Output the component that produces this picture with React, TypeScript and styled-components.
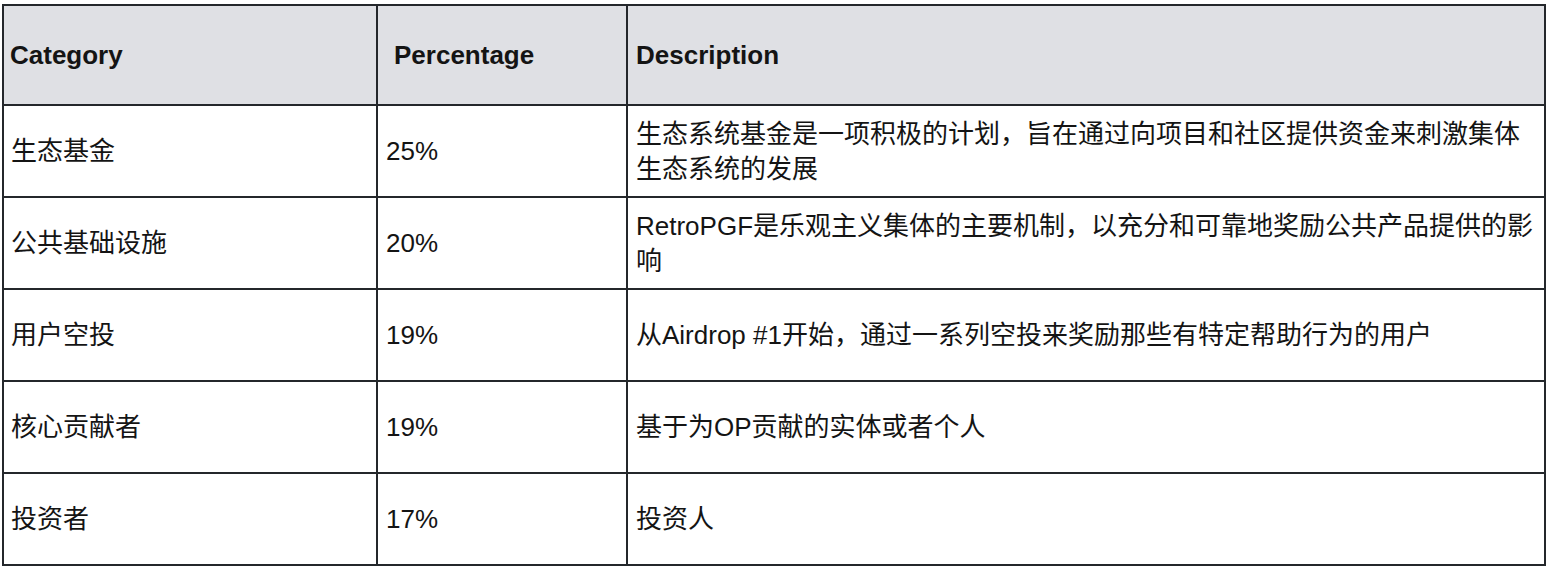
import React from 'react';
import styled, { createGlobalStyle } from 'styled-components';

const GlobalStyle = createGlobalStyle`
  html, body {
    margin: 0;
    padding: 0;
    background: #ffffff;
  }

  body {
    font-family: 'Liberation Sans', 'Noto Sans CJK SC', sans-serif;
    color: #111111;
  }
`;

const Page = styled.div`
  padding: 4px 2px 2px 2px;
`;

const Table = styled.div`
  display: grid;
  grid-template-columns: 374px 250px 918px;
  grid-auto-rows: 92px;
  grid-template-rows: 100px;
  width: 1544px;
  border-left: 2px solid #24272b;
  border-top: 2px solid #24272b;
  box-sizing: border-box;
`;

const Cell = styled.div<{ $pad?: number; $head?: boolean }>`
  display: flex;
  align-items: center;
  box-sizing: border-box;
  border-right: 2px solid #24272b;
  border-bottom: 2px solid #24272b;
  padding: 1px 4px 0 ${({ $pad }) => $pad ?? 8}px;
  background: ${({ $head }) => ($head ? '#dfe0e4' : '#ffffff')};
  font-size: 26px;
  line-height: 35px;
  font-weight: ${({ $head }) => ($head ? 700 : 400)};
  color: #141414;
`;

const rows = [
  {
    category: '生态基金',
    pct: '25%',
    desc: '生态系统基金是一项积极的计划，旨在通过向项目和社区提供资金来刺激集体生态系统的发展',
  },
  {
    category: '公共基础设施',
    pct: '20%',
    desc: 'RetroPGF是乐观主义集体的主要机制，以充分和可靠地奖励公共产品提供的影响',
  },
  {
    category: '用户空投',
    pct: '19%',
    desc: '从Airdrop #1开始，通过一系列空投来奖励那些有特定帮助行为的用户',
  },
  {
    category: '核心贡献者',
    pct: '19%',
    desc: '基于为OP贡献的实体或者个人',
  },
  {
    category: '投资者',
    pct: '17%',
    desc: '投资人',
  },
];

const App: React.FC = () => {
  return (
    <Page>
      <GlobalStyle />
      <Table>
        <Cell $head $pad={6}>Category</Cell>
        <Cell $head $pad={16}>Percentage</Cell>
        <Cell $head>Description</Cell>
        {rows.map((row) => (
          <React.Fragment key={row.category}>
            <Cell $pad={7}>{row.category}</Cell>
            <Cell>{row.pct}</Cell>
            <Cell>{row.desc}</Cell>
          </React.Fragment>
        ))}
      </Table>
    </Page>
  );
};

export default App;
